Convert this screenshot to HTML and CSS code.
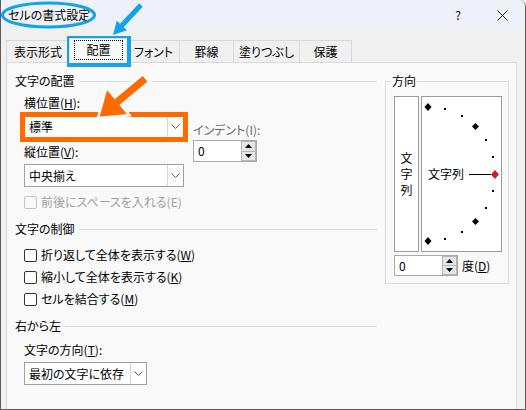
FILE: index.html
```html
<!DOCTYPE html>
<html lang="ja">
<head>
<meta charset="utf-8">
<title>セルの書式設定</title>
<link rel="stylesheet" href="styles.css">
</head>
<body>
<div class="window">
  <div class="titlebar">
    <span class="title">セルの書式設定</span>
    <span class="help">?</span>
    <svg class="close" width="11" height="11" viewBox="0 0 11 11"><path d="M0.5 0.5 L10.5 10.5 M10.5 0.5 L0.5 10.5" stroke="#222" stroke-width="1" fill="none"/></svg>
  </div>
  <div class="tabs">
    <div class="tab t1">表示形式</div>
    <div class="tab t2 active"><span class="focus">配置</span></div>
    <div class="tab t3">フォント</div>
    <div class="tab t4">罫線</div>
    <div class="tab t5">塗りつぶし</div>
    <div class="tab t6">保護</div>
  </div>
  <div class="panel">
    <div class="left">
      <div class="ghead"><span>文字の配置</span><i class="rule"></i></div>
      <div class="sub align">
        <div class="col-a">
          <div class="lbl">横位置(<u>H</u>):</div>
          <div class="dd w160 gap4"><span class="val">標準</span><span class="btn"><svg width="9" height="5" viewBox="0 0 9 5"><path d="M0.5 0.5 L4.5 4.5 L8.5 0.5" stroke="#555" fill="none"/></svg></span></div>
          <div class="lbl gap6">縦位置(<u>V</u>):</div>
          <div class="dd w160 gap4"><span class="val">中央揃え</span><span class="btn"><svg width="9" height="5" viewBox="0 0 9 5"><path d="M0.5 0.5 L4.5 4.5 L8.5 0.5" stroke="#555" fill="none"/></svg></span></div>
        </div>
        <div class="col-b">
          <div class="lbl muted">インデント(I):</div>
          <div class="spin w64 gap2">
            <span class="v">0</span>
            <span class="arrows">
              <span><svg width="7" height="4" viewBox="0 0 7 4"><path d="M0 4 L3.5 0 L7 4 Z" fill="#000"/></svg></span>
              <span><svg width="7" height="4" viewBox="0 0 7 4"><path d="M0 0 L3.5 4 L7 0 Z" fill="#000"/></svg></span>
            </span>
          </div>
        </div>
      </div>
      <div class="cb dis sub gap7"><span class="box"></span>前後にスペースを入れる(E)</div>
      <div class="ghead gap11"><span>文字の制御</span><i class="rule"></i></div>
      <div class="cb sub gap10"><span class="box"></span>折り返して全体を表示する(<u>W</u>)</div>
      <div class="cb sub gap6"><span class="box"></span>縮小して全体を表示する(<u>K</u>)</div>
      <div class="cb sub gap6"><span class="box"></span>セルを結合する(<u>M</u>)</div>
      <div class="ghead gap11"><span>右から左</span><i class="rule"></i></div>
      <div class="lbl sub gap8">文字の方向(<u>T</u>):</div>
      <div class="dd w123 sub gap4"><span class="val">最初の文字に依存</span><span class="btn"><svg width="9" height="5" viewBox="0 0 9 5"><path d="M0.5 0.5 L4.5 4.5 L8.5 0.5" stroke="#555" fill="none"/></svg></span></div>
    </div>
    <div class="dir">
      <div class="dir-legend">方向</div>
      <div class="dir-row">
        <div class="vtext"><span>文</span><span>字</span><span>列</span></div>
        <div class="dial">
          <svg width="79" height="154" viewBox="0 0 79 154">
            <g fill="#000">
              <polygon points="6,6 9.5,10 6,14 2.5,10"/>
              <polygon points="53.5,26 57,29.5 53.5,33 50,29.5"/>
              <polygon points="53.5,121 57,124.5 53.5,128 50,124.5"/>
              <polygon points="6,140 9.5,144 6,148 2.5,144"/>
              <rect x="22" y="11" width="2" height="2"/>
              <rect x="39" y="18" width="2" height="2"/>
              <rect x="63" y="42" width="2" height="2"/>
              <rect x="70" y="59" width="2" height="2"/>
              <rect x="70" y="93" width="2" height="2"/>
              <rect x="63" y="110" width="2" height="2"/>
              <rect x="39" y="134" width="2" height="2"/>
              <rect x="22" y="141" width="2" height="2"/>
            </g>
            <text x="6" y="81.5" class="dial-text">文字列</text>
            <line x1="47" y1="77.5" x2="69" y2="77.5" stroke="#000" stroke-width="1"/>
            <polygon points="73,73.5 76.5,77.5 73,81.5 69.5,77.5" fill="#e81123" stroke="#5a0000" stroke-width="0.6"/>
          </svg>
        </div>
      </div>
      <div class="dir-spin">
        <div class="spin w64 h21">
          <span class="v">0</span>
          <span class="arrows">
            <span><svg width="7" height="4" viewBox="0 0 7 4"><path d="M0 4 L3.5 0 L7 4 Z" fill="#000"/></svg></span>
            <span><svg width="7" height="4" viewBox="0 0 7 4"><path d="M0 0 L3.5 4 L7 0 Z" fill="#000"/></svg></span>
          </span>
        </div>
        <span class="deg">度(<u>D</u>)</span>
      </div>
    </div>
  </div>
</div>
<svg class="overlay" width="526" height="410" viewBox="0 0 526 410">
  <ellipse cx="48.5" cy="15" rx="46" ry="12" fill="none" stroke="#14a3e6" stroke-width="3"/>
  <polygon points="142.8,6.7 123.7,27.2 127,30.3 113,35 116.8,20.7 120,23.8 139.2,3.3" fill="#14a3e6"/>
  <rect x="69.25" y="38.25" width="59.5" height="26.5" fill="none" stroke="#14a3e6" stroke-width="4.5"/>
  <rect x="22.5" y="114.5" width="163" height="25" fill="none" stroke="#fd6b00" stroke-width="5"/>
  <polygon points="149.2,81.8 121.2,105.2 129.5,115.2 98,118 106.5,87.5 114.8,97.5 142.8,74.2" fill="#fd6b00" stroke="#ffffff" stroke-width="2.5" stroke-linejoin="miter"/>
</svg>
</body>
</html>
```

FILE: styles.css
```css
body {
  margin: 0;
  width: 526px;
  height: 410px;
  overflow: hidden;
  background: #f0f0f0;
  font-family: "Noto Sans CJK JP", "Noto Sans", sans-serif;
  font-size: 12px;
  color: #000;
  font-feature-settings: "palt";
}

.window {
  width: 526px;
  height: 410px;
  box-sizing: border-box;
  border: 1px solid #5c5c5c;
  border-top: none;
  border-top-right-radius: 7px;
  background: #f0f0f0;
  display: flex;
  flex-direction: column;
  overflow: hidden;
}

.titlebar {
  height: 30px;
  flex: none;
  background: #eef1f8;
  display: flex;
  align-items: center;
  padding-left: 7px;
}

.title {
  line-height: 16px;
}

.help {
  margin-left: auto;
  width: 8px;
  text-align: center;
  line-height: 16px;
  font-size: 12px;
}

.close {
  display: block;
  margin: 0 17px 0 35px;
}

.tabs {
  display: flex;
  align-items: flex-end;
  height: 24px;
  margin: 8px 0 0 5px;
  flex: none;
}

.tab {
  height: 22px;
  box-sizing: border-box;
  border: 1px solid #d9d9d9;
  border-bottom: none;
  border-right: none;
  background: #f0f0f0;
  text-align: center;
  line-height: 21px;
  white-space: nowrap;
}

.tab:last-child {
  border-right: 1px solid #d9d9d9;
}

.t1 { width: 63px; }
.t2 { width: 58px; }
.t3 { width: 52px; }
.t4 { width: 54px; }
.t5 { width: 66px; }
.t6 { width: 53px; }

.tab.active {
  height: 25px;
  margin-bottom: -1px;
  background: #f9f9f9;
  position: relative;
  z-index: 1;
  display: flex;
  align-items: center;
  justify-content: center;
  padding-bottom: 2px;
}

.focus {
  display: block;
  border: 1px dotted #000;
  padding: 1px 11px;
  line-height: 16px;
}

.panel {
  flex: 1;
  margin: 0 8px 0 5px;
  border: 1px solid #dadada;
  border-bottom: none;
  background: #f9f9f9;
  display: flex;
  align-items: flex-start;
}

.left {
  width: 370px;
  box-sizing: border-box;
  padding: 10px 0 0 8px;
  display: flex;
  flex-direction: column;
}

.ghead {
  display: flex;
  align-items: center;
  height: 16px;
  line-height: 16px;
}

.ghead .rule {
  flex: 1;
  height: 0;
  border-top: 1px solid #dcdcdc;
  margin-left: 4px;
}

.sub { margin-left: 9px; }

.gap2 { margin-top: 2px; }
.gap4 { margin-top: 4px; }
.gap6 { margin-top: 6px; }
.gap7 { margin-top: 7px; }
.gap8 { margin-top: 8px; }
.gap10 { margin-top: 10px; }
.gap11 { margin-top: 11px; }

.lbl {
  height: 16px;
  line-height: 16px;
  white-space: nowrap;
}

.muted { color: #6d6d6d; }

.align {
  display: flex;
  margin-top: 6px;
}

.col-a {
  width: 160px;
  display: flex;
  flex-direction: column;
}

.col-b {
  margin-left: 9px;
  padding-top: 27px;
  display: flex;
  flex-direction: column;
}

.dd {
  height: 23px;
  box-sizing: border-box;
  border: 1px solid #a0a0a0;
  background: #fff;
  display: flex;
  align-items: center;
}

.w160 { width: 160px; }
.w123 { width: 123px; }

.dd .val {
  flex: 1;
  padding-left: 4px;
  line-height: 16px;
  white-space: nowrap;
}

.dd .btn {
  width: 15px;
  align-self: stretch;
  border-left: 1px solid #d4d4d4;
  display: flex;
  align-items: center;
  justify-content: center;
}

.dd .btn svg { display: block; }

.spin {
  height: 22px;
  box-sizing: border-box;
  border: 1px solid #a9a9a9;
  background: #fff;
  display: flex;
}

.spin.h21 { height: 21px; }
.w64 { width: 64px; }

.spin .v {
  flex: 1;
  padding-left: 4px;
  line-height: 20px;
}

.spin.h21 .v { line-height: 19px; }

.spin .arrows {
  width: 15px;
  display: flex;
  flex-direction: column;
}

.spin .arrows span {
  flex: 1;
  background: #e6e6e6;
  border: 1px solid #b4b4b4;
  display: flex;
  align-items: center;
  justify-content: center;
}

.spin .arrows span + span { border-top: none; }

.spin .arrows svg { display: block; }

.cb {
  display: flex;
  align-items: center;
  height: 16px;
  line-height: 16px;
  white-space: nowrap;
}

.cb .box {
  width: 13px;
  height: 13px;
  box-sizing: border-box;
  border: 1px solid #333;
  border-radius: 2px;
  background: #fff;
  margin-right: 4px;
  flex: none;
}

.cb.dis { color: #a0a0a0; }
.cb.dis .box { border-color: #c4c4c4; background: #f9f9f9; }

.dir {
  width: 124px;
  height: 203px;
  box-sizing: border-box;
  border: 1px solid #dcdcdc;
  margin: 18px 0 0 8px;
  padding-left: 8px;
}

.dir-legend {
  width: fit-content;
  margin: -9px 0 0 -3px;
  padding: 0 1px;
  height: 16px;
  line-height: 16px;
  background: #f9f9f9;
}

.dir-row {
  display: flex;
  gap: 2px;
  margin-top: 7px;
}

.vtext {
  width: 25px;
  height: 156px;
  box-sizing: border-box;
  border: 1px solid #9a9a9a;
  background: #fff;
  display: flex;
  flex-direction: column;
  align-items: center;
  justify-content: center;
  line-height: 16px;
}

.dial {
  width: 81px;
  height: 156px;
  box-sizing: border-box;
  border: 1px solid #9a9a9a;
  background: #fff;
}

.dial svg { display: block; }

.dial-text {
  font-family: "Noto Sans CJK JP", sans-serif;
  font-size: 12px;
  fill: #000;
}

.dir-spin {
  display: flex;
  align-items: center;
  margin-top: 3px;
}

.deg {
  margin-left: 4px;
  line-height: 16px;
}

.overlay {
  position: absolute;
  left: 0;
  top: 0;
  pointer-events: none;
}
```
